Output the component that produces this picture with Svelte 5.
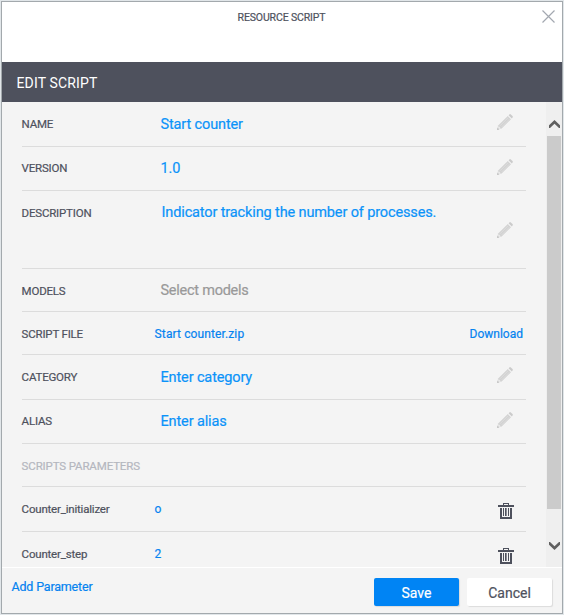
<script>
  const fields = [
    { label: 'NAME', value: 'Start counter', kind: 'large', height: 45, labelTop: 1, valueTop: 1, icon: 'edit', iconTop: 12 },
    { label: 'VERSION', value: '1.0', kind: 'large', height: 44, labelTop: 0, valueTop: 0, icon: 'edit', iconTop: 12 },
    { label: 'DESCRIPTION', value: 'Indicator tracking the number of processes.', kind: 'large indent', height: 78, labelTop: 1, valueTop: 0, icon: 'edit', iconTop: 31 },
    { label: 'MODELS', value: 'Select models', kind: 'large muted', height: 43, labelTop: 1, valueTop: 0 },
    { label: 'SCRIPT FILE', value: 'Start counter.zip', kind: 'link', height: 43, labelTop: 1, valueTop: 1, action: 'Download' },
    { label: 'CATEGORY', value: 'Enter category', kind: 'large', height: 45, labelTop: 1, valueTop: 1, icon: 'edit', iconTop: 12 },
    { label: 'ALIAS', value: 'Enter alias', kind: 'large', height: 44, labelTop: 0, valueTop: 0, icon: 'edit', iconTop: 12 },
    { label: 'SCRIPTS PARAMETERS', heading: true, height: 43, labelTop: 1 },
    { label: 'Counter_initializer', value: 'o', kind: 'link', height: 45, labelTop: 1, valueTop: 1, icon: 'delete', iconTop: 16 },
    { label: 'Counter_step', value: '2', kind: 'link', height: 45, labelTop: 1, valueTop: 1, icon: 'delete', iconTop: 16 }
  ];
</script>

<div class="page">
  <div class="dialog">
    <header>
      <h1>RESOURCE SCRIPT</h1>
      <button class="close" aria-label="Close">
        <svg width="13" height="13" viewBox="0 0 13 13"><path d="M.5 .5l12 12M12.5 .5l-12 12" stroke="#a3a8b0" stroke-width="1.2" fill="none" /></svg>
      </button>
    </header>
    <h2>EDIT SCRIPT</h2>
    <div class="body">
      <div class="rows">
        {#each fields as f}
          <div class="row" style="height:{f.height}px">
            <span class="label" class:heading={f.heading} style="padding-top:{f.labelTop}px">{f.label}</span>
            {#if f.value}
              <span class="value {f.kind}" style="padding-top:{f.valueTop}px">{f.value}</span>
            {/if}
            {#if f.action}<span class="action">{f.action}</span>{/if}
            {#if f.icon === 'edit'}
              <svg class="icon" style="margin-top:{f.iconTop}px" width="16" height="16" viewBox="0 0 16 16">
                <path d="M0 16l1.2-4.6L10.8 2l3.2 3.2L4.6 14.6z" fill="#d2d2d2" />
                <path d="M11.6 1.2L12.4.4Q13.1-.2 13.9.5L15.5 2Q16.2 2.9 15.6 3.6L14.8 4.4z" fill="#cbcbcb" />
                <path d="M3 11.8l8-8M4.4 13.2l8-8" stroke="#e3e3e3" stroke-width=".7" />
                <path d="M1.6 12l2.4 2.4-2.2.5-.7-.7z" fill="#ececec" />
                <path d="M0 16l.6-2.2L2.2 15.4z" fill="#c2c2c2" />
              </svg>
            {:else if f.icon === 'delete'}
              <svg class="icon trash" style="margin-top:{f.iconTop}px" width="16" height="16" viewBox="0 0 16 16" shape-rendering="crispEdges">
                <path fill="#4e515d" fill-rule="evenodd" d="M5 0h6v2h5v2H0V2h5zM6 1v1h4V1zM2 5h12v11H2zM4 5v9h8V5z" />
                <path fill="#4e515d" d="M5 5h1v8H5zM7 5h1v8H7zM10 5h1v8h-1z" />
                <path fill="#8b8d96" d="M8 5h1v8H8z" />
              </svg>
            {/if}
          </div>
        {/each}
      </div>
      <div class="scrollbar">
        <svg width="11" height="8" viewBox="0 0 11 8"><path d="M0 5.2L5.5 0 11 5.2V8H10L5.5 3.8 1 8H0z" fill="#606060" /></svg>
        <div class="thumb"></div>
        <svg width="11" height="8" viewBox="0 0 11 8"><path d="M0 2.8L5.5 8 11 2.8V0H10L5.5 4.2 1 0H0z" fill="#606060" /></svg>
      </div>
    </div>
    <footer>
      <span class="add">Add Parameter</span>
      <button class="btn save">Save</button>
      <button class="btn cancel">Cancel</button>
    </footer>
  </div>
</div>

<style>
  .page {
    box-sizing: border-box;
    width: 564px;
    height: 615px;
    padding: 1px;
    background: #e1e6e9;
    font-family: Roboto, "Liberation Sans", sans-serif;
    color: #4e515d;
    white-space: nowrap;
    -webkit-text-stroke: .2px currentColor;
  }
  .dialog {
    box-sizing: border-box;
    height: 613px;
    display: flex;
    flex-direction: column;
    border: 1px solid #a3a9ad;
    background: #f4f4f4;
  }
  header {
    height: 60px;
    display: flex;
    justify-content: center;
    position: relative;
    background: #fff;
  }
  h1, h2 { margin: 0; font-weight: 400; }
  h1 { font-size: 10.5px; line-height: 31px; margin-right: 1px; letter-spacing: -.14px; }
  button { border: 0; padding: 0; font-family: inherit; }
  .close {
    position: absolute;
    top: 8px;
    right: 7px;
    width: 13px;
    height: 13px;
    background: none;
  }
  svg { display: block; }
  h2 {
    height: 40px;
    padding-left: 14.5px;
    background: #4e515d;
    color: #fff;
    font-size: 14px;
    letter-spacing: .15px;
    line-height: 42px;
    -webkit-text-stroke: 0;
  }
  .body {
    height: 465px;
    display: flex;
    justify-content: space-between;
    overflow: hidden;
    border-bottom: 1px solid #fff;
  }
  .rows { width: 504px; margin-left: 20px; }
  .row {
    box-sizing: border-box;
    display: flex;
    border-bottom: 1px solid #dcdcdc;
    line-height: 43px;
  }
  .label { width: 133px; font-size: 11.5px; letter-spacing: -.2px; text-indent: -.4px; }
  .label.heading { color: #b4b7bf; letter-spacing: -.14px; }
  .value.large { font-size: 14.5px; letter-spacing: -.13px; margin-left: 5.5px; color: #0b93f9; }
  .value.large.indent { margin-left: 6.5px; }
  .value.large.muted { color: #999; letter-spacing: -.25px; }
  .value.link, .action { font-size: 12px; color: #0583f0; }
  .value.link { letter-spacing: .12px; text-indent: -.4px; }
  .action { margin-left: auto; margin-right: 3px; padding-top: 1px; }
  .icon { margin-left: auto; margin-right: 13px; overflow: visible; }
  .icon.trash { margin-right: 12px; }
  .scrollbar {
    box-sizing: border-box;
    width: 16px;
    padding: 18px 1px 17px;
    display: flex;
    flex-direction: column;
    align-items: center;
    background: #efefef;
  }
  .thumb { width: 14px; height: 373px; margin: 8px 0 33px; background: #cbcbcb; }
  footer {
    height: 45px;
    display: flex;
    align-items: flex-start;
  }
  .add { margin: 0 auto 0 9.5px; font-size: 12.5px; letter-spacing: -.18px; line-height: 38px; color: #0583f0; }
  .btn {
    width: 85px;
    height: 28px;
    margin-top: 10px;
    border-radius: 2px;
    font-size: 14px;
    line-height: 30px;
    box-shadow: 1px 1px 1px rgba(0, 0, 0, .1);
  }
  .save { background: #0084f4; color: #fff; }
  .cancel { margin: 10px 10px 0 8px; background: #fff; color: #4e515d; }
</style>
